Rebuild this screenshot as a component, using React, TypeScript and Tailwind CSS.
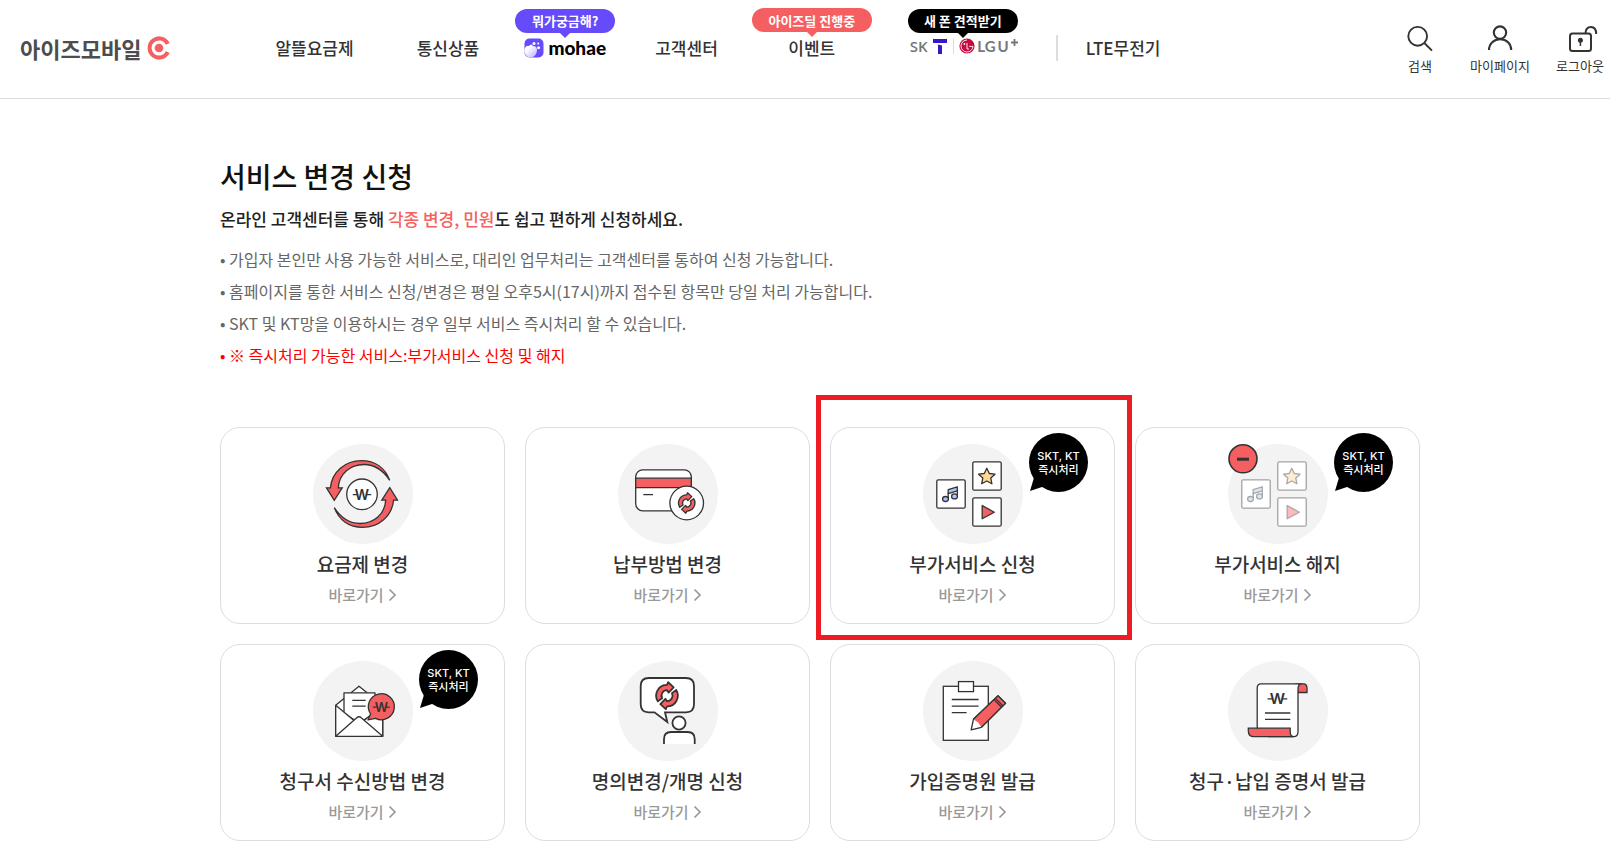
import type { ReactNode } from "react";

const DARK = "#333333";
const CORAL = "#f65f61";

type Service = {
  title: string;
  icon: ReactNode;
  instant?: boolean;
  highlighted?: boolean;
};

function Won({ x, y, size = 14 }: { x: number; y: number; size?: number }) {
  return (
    <g>
      <text
        x={x}
        y={y + size * 0.36}
        textAnchor="middle"
        fontSize={size}
        fontWeight="600"
        fontFamily="Inter, sans-serif"
        fill={DARK}
      >
        W
      </text>
      <path
        d={`M${x - size * 0.66} ${y}h${size * 0.36}M${x + size * 0.3} ${y}h${size * 0.36}`}
        stroke={DARK}
        strokeWidth="1.3"
      />
    </g>
  );
}

const refreshHalf =
  "M-9.4 5.8A11 11 0 0 1 0 -11L1.2 -13.8L6.8 -8.6L1.6 -3.2L0 -5.6A5.6 5.6 0 0 0 -5 2.6Z";

function Refresh({ x, y, scale = 1 }: { x: number; y: number; scale?: number }) {
  return (
    <g
      transform={`translate(${x} ${y}) scale(${scale})`}
      fill={CORAL}
      stroke={DARK}
      strokeWidth="1.8"
      strokeLinejoin="round"
    >
      <path d={refreshHalf} />
      <path d={refreshHalf} transform="rotate(180)" />
    </g>
  );
}

function IconCircle({ children }: { children: ReactNode }) {
  return (
    <svg
      viewBox="0 0 100 100"
      className="size-[100px] overflow-visible"
      fill="#fff"
      stroke={DARK}
      strokeWidth="1.3"
      aria-hidden="true"
    >
      <circle cx="50" cy="50" r="50" fill="#f3f3f3" stroke="none" />
      {children}
    </svg>
  );
}

function PlanIcon() {
  const arrow =
    "M21.3 56.3L13.5 43.8H17.4C19 28 32 16.7 48.5 16.7C62 16.7 72 24 76.7 36.3C70 26 62 20.5 51 20.5C37 20.5 26 30 25.3 43.8H29.2Z";
  return (
    <IconCircle>
      <path d={arrow} fill={CORAL} />
      <path d={arrow} fill={CORAL} transform="rotate(180 49 50)" />
      <circle cx="49" cy="50.3" r="15.3" />
      <g stroke="none">
        <Won x={49} y={50.6} />
      </g>
    </IconCircle>
  );
}

function PaymentIcon() {
  return (
    <IconCircle>
      <rect x="17.7" y="25.8" width="55.6" height="41" rx="7" />
      <path d="M17.7 34.2H73.3V43.6H17.7Z" fill={CORAL} />
      <path d="M25.3 50.6H35" />
      <circle cx="68.7" cy="59" r="16.8" />
      <Refresh x={68.7} y={59} scale={0.74} />
    </IconCircle>
  );
}

function AddonTiles() {
  return (
    <g strokeLinejoin="round">
      <rect x="13.8" y="35.8" width="28.4" height="28.4" rx="1.5" />
      <rect x="49.8" y="17.8" width="28.4" height="28.4" rx="1.5" />
      <rect x="49.8" y="53.8" width="28.4" height="28.4" rx="1.5" />
      <path d="M25.2 45.6L34.3 42.8V46.8L25.2 49.6Z" fill="#a9c5fb" />
      <path d="M25.2 49V55M34.3 46.5V52" fill="none" />
      <ellipse cx="22.5" cy="55" rx="2.9" ry="2.5" fill="#a9c5fb" />
      <ellipse cx="31.5" cy="52.4" rx="2.9" ry="2.5" fill="#a9c5fb" />
      <path
        d="M63.8 24.3L66.3 29.5L72 30.2L67.8 34.1L68.9 39.8L63.8 37L58.7 39.8L59.8 34.1L55.6 30.2L61.3 29.5Z"
        fill="#fed993"
      />
      <path d="M59.2 61.5V74.8L71.3 68.2Z" fill={CORAL} />
    </g>
  );
}

function AddonIcon() {
  return (
    <IconCircle>
      <AddonTiles />
    </IconCircle>
  );
}

function AddonCancelIcon() {
  return (
    <IconCircle>
      <path d="M14 36h28v28h-28zM50 18h28v28h-28zM50 54h28v28h-28z" stroke="none" />
      <g opacity="0.42">
        <AddonTiles />
      </g>
      <circle cx="15" cy="14.8" r="14" fill={CORAL} strokeWidth="1.6" />
      <path d="M9 15.2H21" strokeWidth="3" />
    </IconCircle>
  );
}

function BillIcon() {
  return (
    <IconCircle>
      <g strokeLinejoin="round">
        <path d="M22.7 44.3L46 25.2L69.7 44.3V75.3H22.7Z" />
        <path d="M31 52V31.8H62V52L46 62Z" />
        <path d="M39.3 39.3H52.7M39.3 45.2H52.7" />
        <path d="M22.7 44.3L41 59.5L22.7 75.3ZM69.7 44.3L51 59.5L69.7 75.3Z" stroke="none" />
        <path d="M22.7 75.3V44.3L41 59.5M51 59.5L69.7 44.3V75.3" fill="none" />
        <path d="M22.7 75.3L43.5 57Q46 54.5 48.5 57L69.7 75.3Z" />
        <path d="M55 58.8L57.6 53A13 13 0 1 1 62.5 57.3Z" fill={CORAL} />
      </g>
      <g stroke="none">
        <Won x={68.3} y={46.2} size={13} />
      </g>
    </IconCircle>
  );
}

function NameChangeIcon() {
  return (
    <IconCircle>
      <g strokeWidth="1.8">
        <path
          d="M30.7 17H68Q76 17 76 25V43.3Q76 51.3 68 51.3H47L49.3 61L36.5 51.3H30.7Q22.7 51.3 22.7 43.3V25Q22.7 17 30.7 17Z"
          strokeLinejoin="miter"
        />
        <circle cx="61" cy="62" r="6.6" />
        <path d="M46 83V78Q46 71 53 71H69.7Q76.7 71 76.7 78V83" />
      </g>
      <Refresh x={49} y={34.7} scale={0.98} />
    </IconCircle>
  );
}

function CertificateIcon() {
  return (
    <IconCircle>
      <rect x="20.3" y="25.3" width="45" height="54" />
      <rect x="35.5" y="20.6" width="15" height="10" />
      <path d="M28.8 38.5H55.6M28.8 45.2H55.6M28.8 51.6H43.6" />
      <path d="M48.2 68.8L50.4 58.3L75 34.8L82.5 42.3L58.4 66.3Z" strokeLinejoin="round" />
      <path d="M50.4 58.3L75 34.8L82.5 42.3L58.4 66.3L55.2 61.6Z" fill={CORAL} stroke="none" />
      <path d="M58.4 66.3L82.5 42.3L75 34.8L50.4 58.3M71 38.6L78.6 46.2M72.4 37.4L80 45" fill="none" />
    </IconCircle>
  );
}

function ReceiptIcon() {
  return (
    <IconCircle>
      <path d="M68 22.8H75.5Q79 22.8 79 27V31.5H70Z" fill={CORAL} />
      <path d="M29.2 67V27Q29.2 22.8 33 22.8H73.5Q70 23 70 28V71Q70 75.7 65.5 75.7H40L29.2 67Z" />
      <path d="M20.3 67.2H62.2V71Q62.2 75.7 66 75.7H26Q20.3 75.7 20.3 70Z" fill={CORAL} />
      <path d="M37 52H62.3M37 58.3H62.3" />
      <g stroke="none">
        <Won x={49.4} y={37.8} size={15} />
      </g>
    </IconCircle>
  );
}

const services: Service[] = [
  { title: "요금제 변경", icon: <PlanIcon /> },
  { title: "납부방법 변경", icon: <PaymentIcon /> },
  { title: "부가서비스 신청", icon: <AddonIcon />, instant: true, highlighted: true },
  { title: "부가서비스 해지", icon: <AddonCancelIcon />, instant: true },
  { title: "청구서 수신방법 변경", icon: <BillIcon />, instant: true },
  { title: "명의변경/개명 신청", icon: <NameChangeIcon /> },
  { title: "가입증명원 발급", icon: <CertificateIcon /> },
  { title: "청구·납입 증명서 발급", icon: <ReceiptIcon /> },
];

const notices = [
  "가입자 본인만 사용 가능한 서비스로, 대리인 업무처리는 고객센터를 통하여 신청 가능합니다.",
  "홈페이지를 통한 서비스 신청/변경은 평일 오후5시(17시)까지 접수된 항목만 당일 처리 가능합니다.",
  "SKT 및 KT망을 이용하시는 경우 일부 서비스 즉시처리 할 수 있습니다.",
];

function InstantBadge() {
  return (
    <div className="absolute top-[5px] right-[26px] flex size-[59px] flex-col items-center justify-center rounded-full bg-black text-[11px] leading-[13px] font-medium text-white">
      <svg viewBox="0 0 16 16" className="absolute bottom-0 left-0 size-4" aria-hidden="true">
        <path d="M5.5 0L1 15L16 10Z" fill="#000" />
      </svg>
      <span className="relative font-['Inter']">SKT, KT</span>
      <span className="relative">즉시처리</span>
    </div>
  );
}

function ServiceCard({ service }: { service: Service }) {
  return (
    <li className="relative">
      <a
        href="#"
        className="relative flex flex-col items-center rounded-[20px] border border-[#dddddd] pt-4 pb-[18px]"
      >
        {service.icon}
        <strong className="mt-[6px] text-[19px] leading-7 font-medium text-[#333333]">
          {service.title}
        </strong>
        <span className="mt-[6px] flex items-center gap-1 text-[15px] leading-[21px] font-medium text-[#999999]">
          바로가기
          <svg viewBox="0 0 9 14" className="h-[14px] w-[9px]" aria-hidden="true">
            <path d="M1.5 1.5L7 7L1.5 12.5" fill="none" stroke="#999" strokeWidth="1.7" />
          </svg>
        </span>
        {service.instant && <InstantBadge />}
      </a>
      {service.highlighted && (
        <div className="pointer-events-none absolute -top-8 -right-[17px] -bottom-4 -left-[14px] z-10 border-[5px] border-[#ed1c24]" />
      )}
    </li>
  );
}

function NavBadge({ label, pill, tail }: { label: string; pill: string; tail: string }) {
  return (
    <span
      className={`absolute -top-[27px] left-0 flex h-6 w-full items-center justify-center rounded-full text-[13px] font-bold whitespace-nowrap text-white ${pill}`}
    >
      {label}
      <svg viewBox="0 0 10 5" className="absolute top-full left-1/2 h-[5px] w-[10px] -translate-x-1/2" aria-hidden="true">
        <path d="M0 0H10L5 5Z" fill={tail} />
      </svg>
    </span>
  );
}

function Header() {
  return (
    <header className="flex h-[99px] items-start border-b border-[#dddddd]">
      <a
        href="#"
        className="mt-8 ml-5 flex h-8 shrink-0 items-center gap-[6px] text-[22px] font-bold text-[#4d4d4d]"
      >
        아이즈모바일
        <svg viewBox="0 0 24 24" className="size-6" aria-hidden="true">
          <path d="M20.8 7.8A9.6 9.6 0 1 0 20.8 16.2" fill="none" stroke={CORAL} strokeWidth="4" />
          <circle cx="12" cy="12" r="4.3" fill={CORAL} />
        </svg>
      </a>

      <nav className="mt-9 ml-[104px] flex h-6 shrink-0 items-center text-[17px] font-medium whitespace-nowrap text-[#333333]">
        <a href="#">알뜰요금제</a>
        <a href="#" className="ml-[63px]">통신상품</a>

        <a
          href="#"
          className="relative ml-9 flex h-6 w-[100px] items-center justify-center gap-1 font-['Lato'] text-[19px] font-black text-black"
        >
          <NavBadge
            label="뭐가궁금해?"
            pill="bg-[#654bf9] font-['Noto_Sans_CJK_KR']"
            tail="#654bf9"
          />
          <svg viewBox="0 0 20 20" className="size-5" aria-hidden="true">
            <defs>
              <linearGradient id="hand" x1="0" y1="0" x2="1" y2="1">
                <stop offset="0.3" stopColor="#fff" />
                <stop offset="1" stopColor="#b9adfc" />
              </linearGradient>
            </defs>
            <rect x="0.5" y="0.5" width="19" height="19" rx="5" fill="#654bf9" />
            <path
              d="M0.5 11Q2 7 5 8Q7 5 9 8Q13 8 13 12Q13 17 8.5 19.2Q2 20.5 0.5 14Z"
              fill="url(#hand)"
            />
            <circle cx="10" cy="5.4" r="1.5" fill="#fff" />
            <circle cx="14.2" cy="5.6" r="1" fill="#fff" />
            <circle cx="14.6" cy="9.8" r="1.5" fill="#fff" />
          </svg>
          mohae
        </a>

        <a href="#" className="ml-10">고객센터</a>

        <a href="#" className="relative ml-[34px] w-[120px] text-center">
          <NavBadge label="아이즈딜 진행중" pill="bg-[#f65f61]" tail="#f65f61" />
          이벤트
        </a>

        <a
          href="#"
          className="relative ml-9 flex h-6 w-[110px] items-center justify-between pb-1 font-['Open_Sans'] text-[15px] font-semibold text-[#76777a]"
        >
          <NavBadge
            label="새 폰 견적받기"
            pill="bg-black font-['Noto_Sans_CJK_KR']"
            tail="#000"
          />
          <span className="pl-[2px]">SK</span>
          <svg viewBox="0 0 14 15" className="h-[15px] w-[14px]" aria-hidden="true">
            <path d="M0 0H14V4H0Z" fill="#3617ce" />
            <path d="M5 5.5L9 6.5V15H5Z" fill="#3617ce" />
          </svg>
          <span className="h-4 w-px bg-[#dddddd]" />
          <span className="flex items-center gap-[2px] font-['Lato'] text-[15px] font-bold">
            <svg viewBox="0 0 16 16" className="size-4" aria-hidden="true">
              <circle cx="8" cy="8" r="7.6" fill="#c5093e" />
              <g fill="none" stroke="#fff" strokeWidth="0.9">
                <path d="M8 2A6 6 0 1 0 14 8.4H10.2" />
                <path d="M8 5V11H10" />
              </g>
              <circle cx="5.4" cy="6" r="0.9" fill="#fff" />
            </svg>
            <span>LG</span>
            <span>U</span>
            <svg viewBox="0 0 7 7" className="mb-2 size-[7px]" aria-hidden="true">
              <path d="M3.5 0V7M0 3.5H7" stroke="#76777a" strokeWidth="1.8" />
            </svg>
          </span>
        </a>

        <span className="ml-[38px] h-[26px] w-[2px] bg-[#dddddd]" />
        <a href="#" className="ml-7">LTE무전기</a>
      </nav>

      <div className="mt-6 ml-auto flex shrink-0 gap-5 text-[13px] leading-5 text-[#333333]">
        <button type="button" className="flex w-[60px] flex-col items-center gap-1">
          <svg viewBox="0 0 28 28" className="size-7" fill="none" stroke={DARK} strokeWidth="1.9" aria-hidden="true">
            <circle cx="11.7" cy="12.3" r="9.4" />
            <path d="M18.3 19L26 26.6" />
          </svg>
          검색
        </button>
        <button type="button" className="flex w-[60px] flex-col items-center gap-1 whitespace-nowrap">
          <svg viewBox="0 0 28 28" className="size-7" fill="none" stroke={DARK} strokeWidth="2.1" aria-hidden="true">
            <circle cx="14" cy="8.6" r="6.2" />
            <path d="M3 26C3 19.5 8 15.2 14.2 15.2C20.5 15.2 25.2 19.5 25.2 26" />
          </svg>
          마이페이지
        </button>
        <button type="button" className="flex w-[60px] flex-col items-center gap-1">
          <svg viewBox="0 0 28 28" className="size-7 overflow-visible" fill="none" stroke={DARK} strokeWidth="2" aria-hidden="true">
            <rect x="4" y="9.5" width="21" height="17.6" rx="2.5" />
            <path d="M19.5 9.5C19.5 5.5 21.5 3 25 3C28.5 3 30.2 5.5 30.2 10" />
            <circle cx="14.4" cy="16.3" r="2.5" fill={DARK} stroke="none" />
            <path d="M14.4 16V22" strokeWidth="1.5" />
          </svg>
          로그아웃
        </button>
      </div>
    </header>
  );
}

export default function App() {
  return (
    <div className="min-h-screen bg-white font-['Noto_Sans_CJK_KR',sans-serif]">
      <Header />

      <main className="pt-[57px] pb-3 pl-[30px]">
        <div className="mx-auto max-w-[1200px]">
          <h1 className="text-[28px] leading-10 font-medium text-[#111111]">서비스 변경 신청</h1>
          <p className="mt-[11px] text-[17px] leading-6 font-medium text-[#222222]">
            온라인 고객센터를 통해 <em className="text-[#f65f61] not-italic">각종 변경, 민원</em>도 쉽고
            편하게 신청하세요.
          </p>

          <ul className="mt-3 text-base leading-8 text-[#666666]">
            {notices.map((notice) => (
              <li key={notice}>• {notice}</li>
            ))}
            <li className="text-[#ff0000]">• ※ 즉시처리 가능한 서비스:부가서비스 신청 및 해지</li>
          </ul>

          <ul className="mt-14 grid grid-cols-4 gap-5">
            {services.map((service) => (
              <ServiceCard key={service.title} service={service} />
            ))}
          </ul>
        </div>
      </main>
    </div>
  );
}
